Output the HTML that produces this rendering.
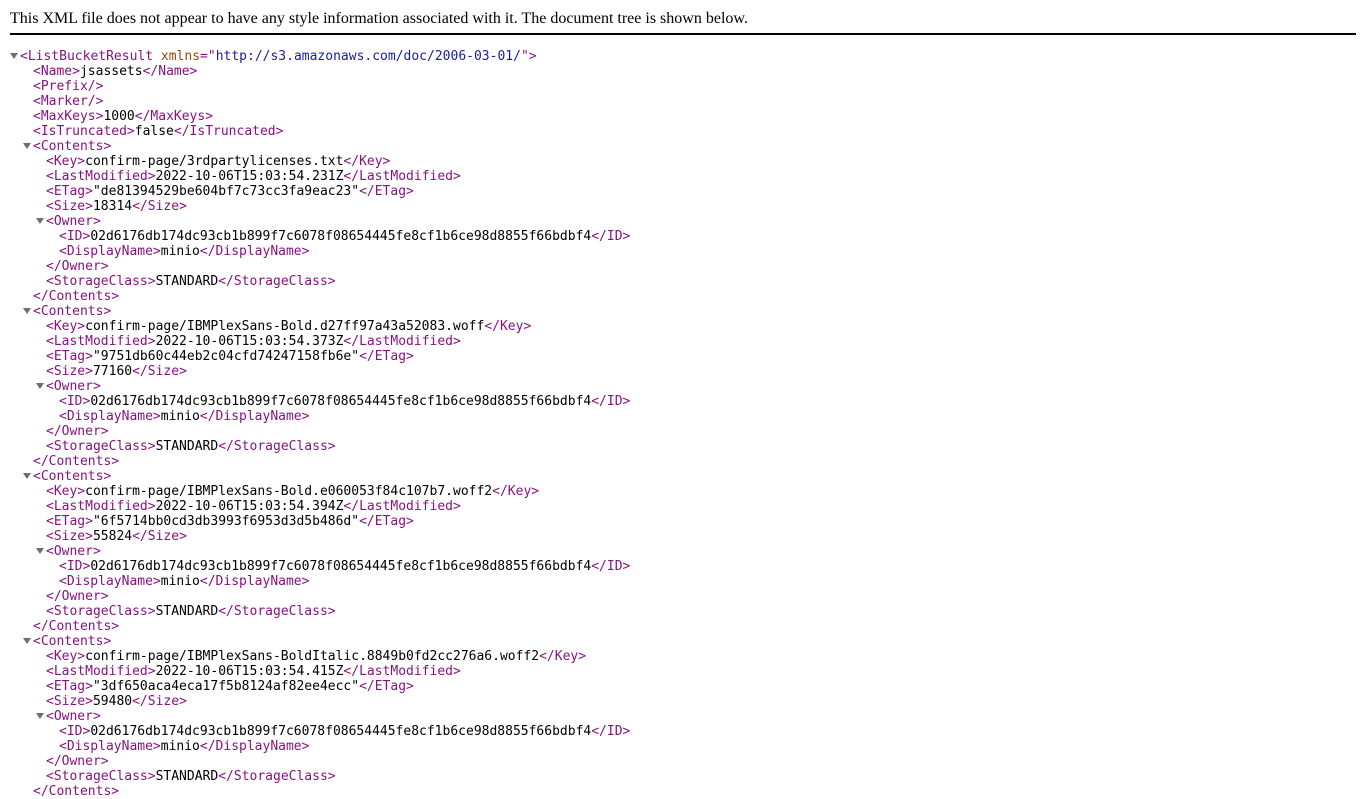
<!DOCTYPE html>
<html><head><meta charset="utf-8"><style>
body{margin:0;background:#fff;width:1366px;height:768px;overflow:hidden;position:relative}
.hdr{position:absolute;left:10px;top:9px;padding-top:1px;width:1346px;font:16px "Liberation Serif",serif;color:#000;height:23px;border-bottom:2px solid #000}
.tree{position:absolute;left:0;top:49px;font:13px/15px "DejaVu Sans Mono",monospace;white-space:pre;color:#000}
.l{height:15px;position:relative}
.t{color:#881280}.an{color:#994500}.av{color:#1a1aa6}
.a{position:absolute;top:4px;width:0;height:0;border-left:4px solid transparent;border-right:4px solid transparent;border-top:6px solid #6e6e6e}
</style></head><body>
<div class="hdr">This XML file does not appear to have any style information associated with it. The document tree is shown below.</div>
<div class="tree" id="tr"></div>
<script>
const T=s=>'<span class="t">'+s.replace(/</g,'&lt;').replace(/>/g,'&gt;')+'</span>';
let h='';
function line(lv,html,arrow){h+='<div class="l" style="padding-left:'+(20+13*lv)+'px">'+(arrow?'<span class="a" style="left:'+(10+13*lv)+'px"></span>':'')+html+'</div>';}
function el(lv,n,v){line(lv,T('<'+n+'>')+v+T('</'+n+'>'));}
line(0,T('<ListBucketResult ')+'<span class="an">xmlns</span><span class="t">="</span><span class="av">http://s3.amazonaws.com/doc/2006-03-01/</span><span class="t">"&gt;</span>',1);
el(1,'Name','jsassets');line(1,T('<Prefix/>'));line(1,T('<Marker/>'));el(1,'MaxKeys','1000');el(1,'IsTruncated','false');
const items=[['confirm-page/3rdpartylicenses.txt','2022-10-06T15:03:54.231Z','de81394529be604bf7c73cc3fa9eac23','18314'],
['confirm-page/IBMPlexSans-Bold.d27ff97a43a52083.woff','2022-10-06T15:03:54.373Z','9751db60c44eb2c04cfd74247158fb6e','77160'],
['confirm-page/IBMPlexSans-Bold.e060053f84c107b7.woff2','2022-10-06T15:03:54.394Z','6f5714bb0cd3db3993f6953d3d5b486d','55824'],
['confirm-page/IBMPlexSans-BoldItalic.8849b0fd2cc276a6.woff2','2022-10-06T15:03:54.415Z','3df650aca4eca17f5b8124af82ee4ecc','59480']];
for(const it of items){line(1,T('<Contents>'),1);el(2,'Key',it[0]);el(2,'LastModified',it[1]);el(2,'ETag','"'+it[2]+'"');el(2,'Size',it[3]);
line(2,T('<Owner>'),1);el(3,'ID','02d6176db174dc93cb1b899f7c6078f08654445fe8cf1b6ce98d8855f66bdbf4');el(3,'DisplayName','minio');line(2,T('</Owner>'));
el(2,'StorageClass','STANDARD');line(1,T('</Contents>'));}
document.getElementById('tr').innerHTML=h;
</script>
</body></html>
